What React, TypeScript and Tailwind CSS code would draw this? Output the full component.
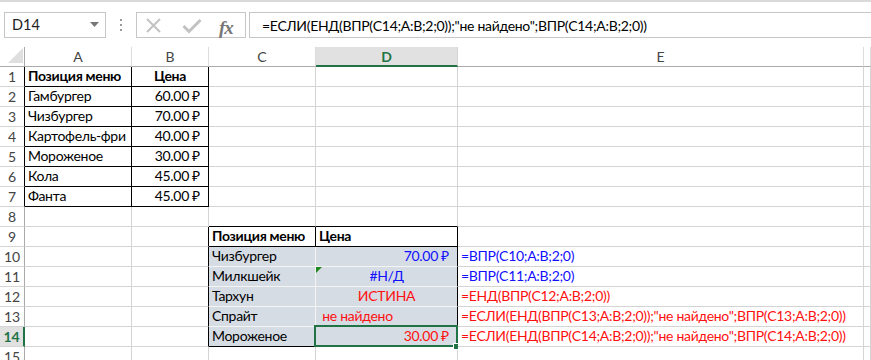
import React from "react";

type Cell = { t: string; b?: boolean; al?: "l" | "r" | "c"; col?: "blue" | "red" };

const data: Record<string, Cell> = {
  "1,1": { t: "Позиция меню", b: true },
  "1,2": { t: "Цена", b: true, al: "c" },
  "2,1": { t: "Гамбургер" },
  "2,2": { t: "60.00 ₽", al: "r" },
  "3,1": { t: "Чизбургер" },
  "3,2": { t: "70.00 ₽", al: "r" },
  "4,1": { t: "Картофель-фри" },
  "4,2": { t: "40.00 ₽", al: "r" },
  "5,1": { t: "Мороженое" },
  "5,2": { t: "30.00 ₽", al: "r" },
  "6,1": { t: "Кола" },
  "6,2": { t: "45.00 ₽", al: "r" },
  "7,1": { t: "Фанта" },
  "7,2": { t: "45.00 ₽", al: "r" },
  "9,3": { t: "Позиция меню", b: true },
  "9,4": { t: "Цена", b: true },
  "10,3": { t: "Чизбургер" },
  "10,4": { t: "70.00 ₽", al: "r", col: "blue" },
  "10,5": { t: "=ВПР(C10;A:B;2;0)", col: "blue" },
  "11,3": { t: "Милкшейк" },
  "11,4": { t: "#Н/Д", al: "c", col: "blue" },
  "11,5": { t: "=ВПР(C11;A:B;2;0)", col: "blue" },
  "12,3": { t: "Тархун" },
  "12,4": { t: "ИСТИНА", al: "c", col: "red" },
  "12,5": { t: "=ЕНД(ВПР(C12;A:B;2;0))", col: "red" },
  "13,3": { t: "Спрайт" },
  "13,4": { t: "\u00a0не найдено", col: "red" },
  "13,5": { t: '=ЕСЛИ(ЕНД(ВПР(C13;A:B;2;0));"не найдено";ВПР(C13;A:B;2;0))', col: "red" },
  "14,3": { t: "Мороженое" },
  "14,4": { t: "30.00 ₽", al: "r", col: "red" },
  "14,5": { t: '=ЕСЛИ(ЕНД(ВПР(C14;A:B;2;0));"не найдено";ВПР(C14;A:B;2;0))', col: "red" },
};

const inT1 = (r: number, c: number) => r >= 1 && r <= 7 && c >= 1 && c <= 2;
const inT2 = (r: number, c: number) => r >= 9 && r <= 14 && c >= 3 && c <= 4;
const inT = (r: number, c: number) => inT1(r, c) || inT2(r, c);
const fillAt = (r: number, c: number) => r >= 10 && r <= 14 && (c === 3 || c === 4);

const LETTERS = ["A", "B", "C", "D", "E", ""];
const ROWS = Array.from({ length: 15 }, (_, i) => i + 1);

function GridCell({ r, c }: { r: number; c: number }) {
  const d = data[`${r},${c}`];
  const fill = fillAt(r, c);
  const rightInner = fill && fillAt(r, c + 1);
  const bottomInner = fill && fillAt(r + 1, c);
  const rightBlack = !rightInner && (inT(r, c) || inT(r, c + 1));
  const bottomBlack = !bottomInner && (inT(r, c) || inT(r + 1, c));
  const cls = [
    "h-[20px] border-r border-b flex items-center overflow-visible whitespace-nowrap text-[14px] tracking-[-0.3px] leading-none",
    rightInner ? "border-r-[#f4f4f4]" : rightBlack ? "border-r-black" : "border-r-[#d4d4d4]",
    bottomInner ? "border-b-[#f4f4f4]" : bottomBlack ? "border-b-black" : "border-b-[#d4d4d4]",
    fill ? "bg-[#d6dce4]" : "bg-white",
    d?.al === "r" ? "justify-end pr-[8px]" : d?.al === "c" ? "justify-center" : "justify-start pl-[3px]",
    d?.b ? "font-bold" : "",
    d?.col === "blue" ? "text-[#1010ff]" : d?.col === "red" ? "text-[#ff1010]" : "text-black",
    c === 5 ? "relative z-10" : "",
  ].join(" ");
  return (
    <div className={cls}>
      {d ? <span className="pb-[1px]">{d.t}</span> : null}
    </div>
  );
}

export default function App() {
  return (
    <div className="relative w-[871px] h-[360px] overflow-hidden bg-white font-['Lato',sans-serif] text-black">
      {/* top formula bar area */}
      <div className="h-[47px] border-t-2 border-t-[#dadada] relative">
        <div className="absolute left-[4px] top-[10px] w-[102px] h-[26px] border border-[#c6c6c6] flex items-center pl-[7px] text-[14.5px] text-[#222]">
          D14
          <svg className="absolute right-[6px] top-[9px]" width="9" height="5" viewBox="0 0 9 5">
            <polygon points="0,0 9,0 4.5,5" fill="#777" />
          </svg>
        </div>
        <div className="absolute left-[120px] top-[17px] flex flex-col gap-[3px]">
          <div className="w-[2px] h-[2px] bg-[#999]" />
          <div className="w-[2px] h-[2px] bg-[#999]" />
          <div className="w-[2px] h-[2px] bg-[#999]" />
        </div>
        <div className="absolute left-[136px] top-[10px] w-[110px] h-[26px] border border-[#c6c6c6]">
          <svg className="absolute left-[8px] top-[4px]" width="17" height="17" viewBox="0 0 17 17">
            <path d="M2 2 L15 15 M15 2 L2 15" stroke="#c2c2c2" strokeWidth="2" fill="none" />
          </svg>
          <svg className="absolute left-[45px] top-[5px]" width="20" height="16" viewBox="0 0 20 16">
            <path d="M1.5 8 L7 13.5 L18.5 2" stroke="#c2c2c2" strokeWidth="3" fill="none" />
          </svg>
          <span className="absolute left-[82px] top-[1px] font-['Liberation_Serif',serif] italic text-[19px] text-[#777] font-bold tracking-[-1px]">
            fx
          </span>
        </div>
        <div className="absolute left-[249px] top-[10px] w-[640px] h-[26px] border border-[#c6c6c6] flex items-center pl-[12px] text-[14px] tracking-[-0.3px] whitespace-nowrap">
          {'=ЕСЛИ(ЕНД(ВПР(C14;A:B;2;0));"не найдено";ВПР(C14;A:B;2;0))'}
        </div>
      </div>

      {/* grid */}
      <div className="grid grid-cols-[25px_107px_77px_107px_142px_406px_7px]">
        <div className="h-[20px] border-r border-b border-r-[#ababab] border-b-[#ababab] relative bg-white">
          <svg className="absolute left-[8px] top-[1px]" width="16" height="16" viewBox="0 0 16 16">
            <polygon points="0,15 15,15 15,0" fill="#dfdfdf" />
          </svg>
        </div>
        {LETTERS.map((L, i) =>
          L === "D" ? (
            <div
              key={i}
              className="h-[20px] border-r border-r-[#d4d4d4] border-b-2 border-b-[#217346] bg-[#e1e1e1] flex items-center justify-center text-[14px] font-bold text-[#217346]"
            >
              <span className="pt-[1px]">D</span>
            </div>
          ) : (
            <div
              key={i}
              className="h-[20px] border-r border-r-[#dcdcdc] border-b border-b-[#ababab] bg-white flex items-center justify-center text-[14px] text-[#444]"
            >
              {L}
            </div>
          )
        )}
        {ROWS.map((r) => (
          <React.Fragment key={r}>
            {r === 14 ? (
              <div className="h-[20px] border-r-2 border-r-[#217346] border-b border-b-[#d4d4d4] bg-[#e1e1e1] flex items-center justify-center text-[14px] font-bold text-[#217346]">
                {r}
              </div>
            ) : (
              <div
                className={
                  "h-[20px] border-r border-b border-b-[#d4d4d4] bg-white flex items-center justify-center text-[14px] text-[#444] " +
                  (r <= 7 ? "border-r-black" : "border-r-[#ababab]")
                }
              >
                {r}
              </div>
            )}
            {[1, 2, 3, 4, 5, 6].map((c) => (
              <GridCell key={c} r={r} c={c} />
            ))}
          </React.Fragment>
        ))}
      </div>

      {/* error indicator on D11 */}
      <svg className="absolute left-[316px] top-[267px]" width="6" height="6" viewBox="0 0 6 6">
        <polygon points="0,0 6,0 0,6" fill="#1e8a1e" />
      </svg>

      {/* selection D14 */}
      <div className="absolute left-[314px] top-[325px] w-[144px] h-[22px] border-2 border-[#217346]" />
      <div className="absolute left-[453px] top-[343px] w-[7px] h-[7px] bg-[#217346] border border-white" />
    </div>
  );
}
